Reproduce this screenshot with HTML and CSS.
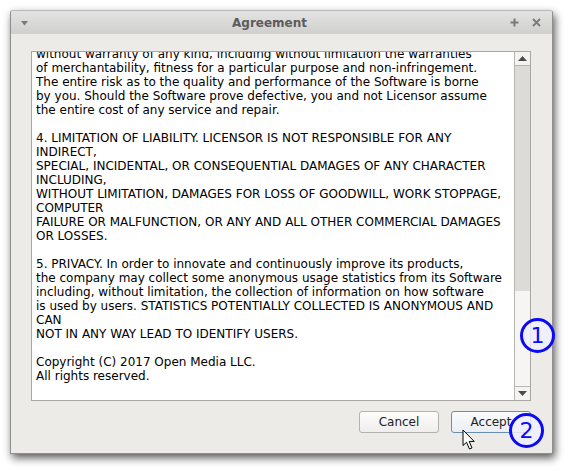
FILE: index.html
```html
<!DOCTYPE html>
<html>
<head>
<meta charset="utf-8">
<link rel="stylesheet" href="styles.css">
</head>
<body>
<div class="window">
  <div class="titlebar">
    <svg class="tb-menu" width="8" height="5" viewBox="0 0 8 5"><path d="M0 0H7L3.5 4.5Z" fill="#7a7a7a"/></svg>
    <div class="title">Agreement</div>
    <div class="tb-right">
      <svg width="9" height="9" viewBox="0 0 9 9"><path d="M4.5 0.5V8.5M0.5 4.5H8.5" stroke="#7a7a7a" stroke-width="2"/></svg>
      <svg width="9" height="9" viewBox="0 0 9 9"><path d="M1 1L8 8M8 1L1 8" stroke="#7a7a7a" stroke-width="1.8"/></svg>
    </div>
  </div>
  <div class="content">
    <div class="textbox">
      <div class="textview"><div class="text">without warranty of any kind, including without limitation the warranties
of merchantability, fitness for a particular purpose and non-infringement.
The entire risk as to the quality and performance of the Software is borne
by you. Should the Software prove defective, you and not Licensor assume
the entire cost of any service and repair.

4. LIMITATION OF LIABILITY. LICENSOR IS NOT RESPONSIBLE FOR ANY
INDIRECT,
SPECIAL, INCIDENTAL, OR CONSEQUENTIAL DAMAGES OF ANY CHARACTER
INCLUDING,
WITHOUT LIMITATION, DAMAGES FOR LOSS OF GOODWILL, WORK STOPPAGE,
COMPUTER
FAILURE OR MALFUNCTION, OR ANY AND ALL OTHER COMMERCIAL DAMAGES
OR LOSSES.

5. PRIVACY. In order to innovate and continuously improve its products,
the company may collect some anonymous usage statistics from its Software
including, without limitation, the collection of information on how software
is used by users. STATISTICS POTENTIALLY COLLECTED IS ANONYMOUS AND
CAN
NOT IN ANY WAY LEAD TO IDENTIFY USERS.

Copyright (C) 2017 Open Media LLC.
All rights reserved.</div></div>
      <div class="scrollbar">
        <div class="sb-btn"><svg width="9" height="5" viewBox="0 0 9 5"><path d="M0 5H9L4.5 0Z" fill="#4a4a4a"/></svg></div>
        <div class="sb-track"><div class="sb-thumb"></div></div>
        <div class="sb-btn sb-btn-down"><svg width="9" height="5" viewBox="0 0 9 5"><path d="M0 0H9L4.5 5Z" fill="#4a4a4a"/></svg></div>
      </div>
    </div>
    <div class="buttons">
      <button class="btn">Cancel</button>
      <button class="btn btn-default">Accept</button>
    </div>
  </div>
  <div class="marker marker-1">1</div>
  <div class="marker marker-2">2</div>
  <svg class="cursor" width="15" height="22" viewBox="0 0 15 22"><path d="M1 1V16.5L4.6 13.3L7.5 20L10 18.9L7.2 12.4H12.2Z" fill="#fff" stroke="#000" stroke-width="1" stroke-linejoin="round"/></svg>
</div>
</body>
</html>
```
FILE: styles.css
```css
html, body {
  margin: 0;
  padding: 0;
  background: #ffffff;
}
body {
  width: 568px;
  height: 471px;
  overflow: hidden;
  font-family: "DejaVu Sans", sans-serif;
}
.window {
  position: relative;
  margin: 10px 0 0 10px;
  width: 543px;
  height: 444px;
  box-sizing: border-box;
  background: #edebe7;
  border: 1px solid #8e8e8e;
  border-top-color: #b8b8b8;
  border-radius: 3px 3px 0 0;
  box-shadow: 2px 4px 9px rgba(0, 0, 0, 0.65);
  display: flex;
  flex-direction: column;
}
.titlebar {
  height: 23px;
  flex: none;
  display: flex;
  align-items: center;
  background: linear-gradient(#e3e3e2, #cfcfce);
  border-radius: 2px 2px 0 0;
  padding: 0 11px 0 10px;
}
.tb-menu {
  flex: none;
  margin-top: 1px;
}
.title {
  flex: 1;
  text-align: center;
  font-size: 12px;
  font-weight: bold;
  color: #5c5c5c;
  padding-top: 1px;
}
.tb-right {
  display: flex;
  gap: 13px;
  align-items: center;
}
.content {
  flex: 1;
  display: flex;
  flex-direction: column;
  padding: 17px 21px 0 20px;
}
.textbox {
  height: 350px;
  box-sizing: border-box;
  border: 1px solid #a9a7a3;
  background: #ffffff;
  display: flex;
}
.textview {
  flex: 1;
  overflow: hidden;
}
.text {
  margin-top: -5px;
  padding-left: 4px;
  white-space: pre;
  font-size: 12px;
  line-height: 14px;
  color: #000;
}
.scrollbar {
  width: 15px;
  flex: none;
  border-left: 1px solid #b8b6b2;
  display: flex;
  flex-direction: column;
}
.sb-btn {
  height: 13px;
  flex: none;
  background: #f4f3f1;
  border-bottom: 1px solid #b8b6b2;
  display: flex;
  align-items: center;
  justify-content: center;
}
.sb-btn-down {
  border-bottom: none;
  border-top: 1px solid #b8b6b2;
}
.sb-track {
  flex: 1;
  background: #f6f5f3;
  display: flex;
  flex-direction: column;
}
.sb-thumb {
  height: 225px;
  background: #dcdbd8;
}
.buttons {
  display: flex;
  justify-content: flex-end;
  gap: 12px;
  margin-top: 10px;
}
.btn {
  width: 80px;
  height: 22px;
  box-sizing: border-box;
  border: 1px solid #b3b1ad;
  border-radius: 3px;
  background: linear-gradient(#fdfdfc, #efeeec);
  font-family: "DejaVu Sans", sans-serif;
  font-size: 12px;
  color: #222;
  padding: 0;
}
.btn-default {
  border-color: #6a8fae;
  background: linear-gradient(#fafcfe, #eaeef2);
}
.marker {
  position: absolute;
  width: 35px;
  height: 35px;
  box-sizing: border-box;
  border: 3px solid #0a0af5;
  border-radius: 50%;
  background: rgba(240, 240, 255, 0.85);
  color: #0a0af5;
  font-size: 22px;
  line-height: 29px;
  text-align: center;
}
.marker-1 {
  left: 509px;
  top: 307px;
}
.marker-2 {
  left: 498px;
  top: 402px;
}
.cursor {
  position: absolute;
  left: 451px;
  top: 418px;
}
```
